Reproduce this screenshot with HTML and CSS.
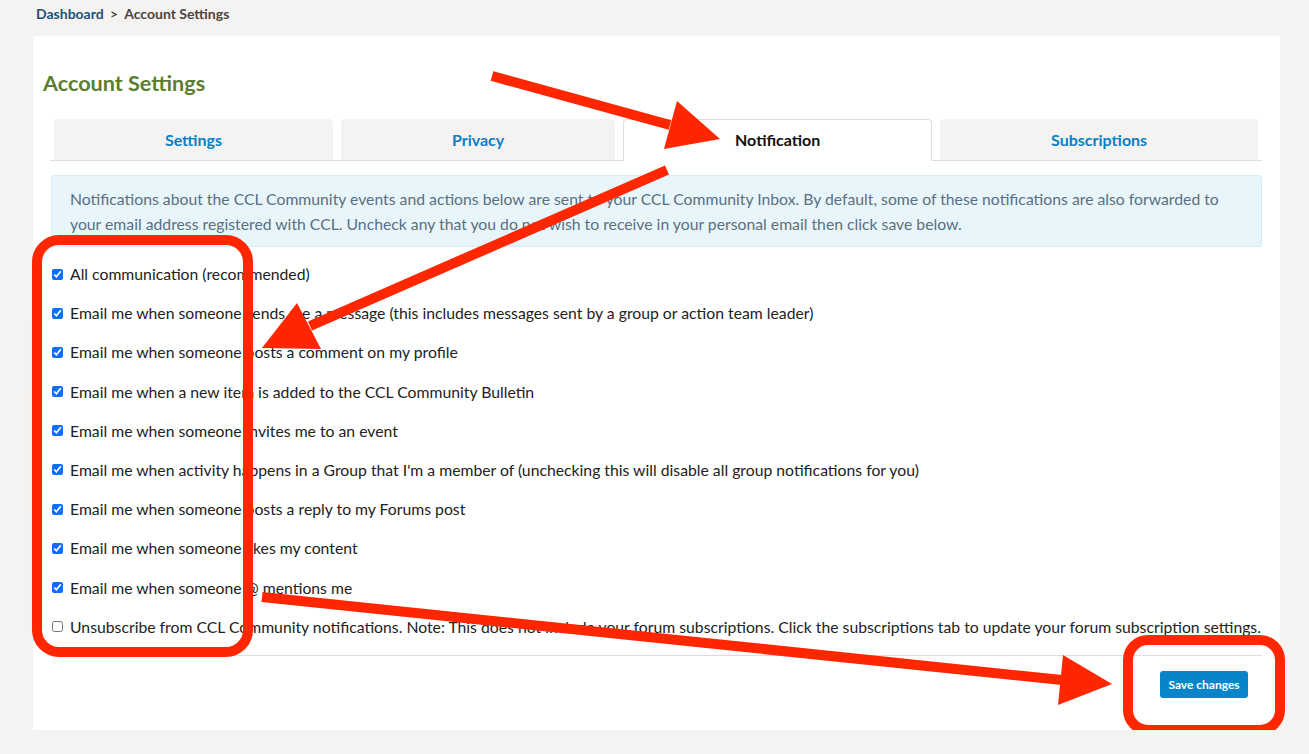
FILE: index.html
```html
<!DOCTYPE html>
<html lang="en">
    <head>
        <meta charset="utf-8">
        <link rel="stylesheet" href="styles.css">
    </head>
    <body>
        <div class="crumbs"><a href="#">Dashboard</a> <span class="sep">&gt;</span> Account Settings</div>
        <div class="panel">
            <h1>Account Settings</h1>
            <div class="tabs">
                <a class="tab" href="#">Settings</a>
                <a class="tab" href="#">Privacy</a>
                <a class="tab on" href="#">Notification</a>
                <a class="tab" href="#">Subscriptions</a>
            </div>
            <div class="note">Notifications about the CCL Community events and actions below are sent to your CCL Community Inbox. By default, some of these notifications are also forwarded to your email address registered with CCL. Uncheck any that you do not wish to receive in your personal email then click save below.</div>
            <ul class="opts">
                <li><label><input type="checkbox" checked>All communication (recommended)</label></li>
                <li><label><input type="checkbox" checked>Email me when someone sends me a message (this includes messages sent by a group or action team leader)</label></li>
                <li><label><input type="checkbox" checked>Email me when someone posts a comment on my profile</label></li>
                <li><label><input type="checkbox" checked>Email me when a new item is added to the CCL Community Bulletin</label></li>
                <li><label><input type="checkbox" checked>Email me when someone invites me to an event</label></li>
                <li><label><input type="checkbox" checked>Email me when activity happens in a Group that I'm a member of (unchecking this will disable all group notifications for you)</label></li>
                <li><label><input type="checkbox" checked>Email me when someone posts a reply to my Forums post</label></li>
                <li><label><input type="checkbox" checked>Email me when someone likes my content</label></li>
                <li><label><input type="checkbox" checked>Email me when someone @ mentions me</label></li>
                <li><label><input type="checkbox">Unsubscribe from CCL Community notifications. Note: This does not include your forum subscriptions. Click the subscriptions tab to update your forum subscription settings.</label></li>
            </ul>
            <div class="actions">
                <button type="button">Save changes</button>
            </div>
        </div>

        <!-- annotation marks drawn over the page -->
        <svg class="marks" width="1309" height="754" viewBox="0 0 1309 754">
            <g fill="none" stroke="#ff2600" stroke-width="10">
                <rect x="37" y="240" width="211" height="412" rx="22"/>
                <rect x="1128" y="640" width="152" height="90" rx="20"/>
                <line x1="492" y1="76" x2="670" y2="125"/>
                <line x1="667" y1="170" x2="310" y2="326"/>
                <line x1="262" y1="597" x2="1062" y2="680"/>
            </g>
            <g fill="#ff2600">
                <polygon points="677,101 664,149 720,139"/>
                <polygon points="297,303 321,349 262,348"/>
                <polygon points="1063,655 1058,705 1112,684"/>
            </g>
        </svg>
    </body>
</html>
```

FILE: styles.css
```css
*{
    box-sizing: border-box;
}
body{
    margin: 0;
    background: #f4f3f1;
    font-family: Lato, "Liberation Sans", sans-serif;
    position: relative;
}
.crumbs{
    height: 36px;
    line-height: 28px;
    padding-left: 36px;
    font-size: 14px;
    font-weight: 700;
    color: #4a4444;
}
.crumbs a{
    color: #1f5177;
    text-decoration: none;
}
.crumbs .sep{
    margin: 0 3px;
}
.panel{
    margin: 0 29px 0 33px;
    padding: 0 10px 32px;
    background: #fff;
}
h1{
    margin: 0;
    padding-top: 34px;
    font-size: 21.6px;
    line-height: 26px;
    font-weight: 700;
    color: #5b7d30;
}
.tabs{
    display: flex;
    margin: 23px 8px 0 7px;
    border-bottom: 1px solid #ddd;
}
.tab{
    flex: auto;
    height: 41px;
    margin: 0 4px;
    line-height: 41px;
    text-align: center;
    background: #f4f3f1;
    border-radius: 4px 4px 0 0;
    font-size: 16px;
    font-weight: 700;
    color: #0a7fc6;
    text-decoration: none;
}
.tab.on{
    height: 42px;
    margin-bottom: -1px;
    line-height: 40px;
    background: #fff;
    border: 1px solid #ddd;
    border-bottom-color: #fff;
    color: #111;
}
.note{
    margin: 14px 8px 0;
    padding: 10px 18px;
    background: #e8f6fc;
    border: 1px solid #d3edf8;
    border-radius: 3px;
    font-size: 15.75px;
    line-height: 25px;
    color: #5a6f80;
}
.opts{
    list-style: none;
    margin: 15px 8px 0;
    padding: 0;
}
.opts li{
    height: 24px;
    margin-bottom: 15.2px;
    font-size: 15.75px;
    line-height: 24px;
    color: #222;
}
.opts li:last-child{
    margin-bottom: 16px;
}
.opts label{
    display: flex;
    align-items: center;
    white-space: nowrap;
}
.opts input{
    width: 11px;
    height: 11px;
    margin: 0 7px 0 1px;
    accent-color: #0b6efd;
}
.actions{
    display: flex;
    justify-content: flex-end;
    margin: 0 8px;
    padding: 15px 14px 0 0;
    border-top: 1px solid #ddd;
}
.actions button{
    width: 88px;
    height: 27px;
    border: 0;
    border-radius: 3px;
    background: #0a84c8;
    color: #fff;
    font-family: Lato, "Liberation Sans", sans-serif;
    font-size: 12px;
    font-weight: 700;
}
.marks{
    position: absolute;
    left: 0;
    top: 0;
    pointer-events: none;
}
```
